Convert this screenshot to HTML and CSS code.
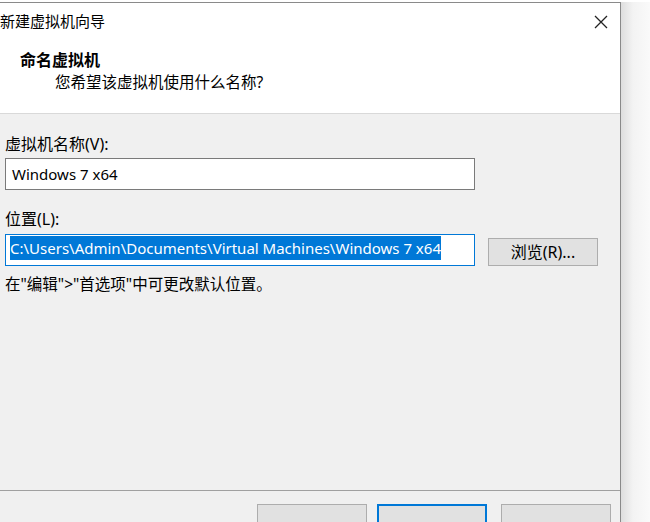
FILE: index.html
```html
<!DOCTYPE html>
<html lang="zh-CN">

<head>
  <meta charset="UTF-8">
  <title>新建虚拟机向导</title>
  <link rel="stylesheet" href="styles.css">
</head>

<body>
  <div class='screen'>
    <div class='window'>
      <div class='top'>
        <div class='titlebar'>
          <span class='title'>新建虚拟机向导</span>
          <svg class='close' width="14" height="14" viewBox="0 0 14 14">
            <path d="M1 1 L13 13 M13 1 L1 13" stroke="#222" stroke-width="1.3" fill="none"/>
          </svg>
        </div>
        <div class='step'>
          <div class='step-name'>命名虚拟机</div>
          <div class='step-desc'>您希望该虚拟机使用什么名称?</div>
        </div>
      </div>
      <div class='content'>
        <div class='label'>虚拟机名称(V):</div>
        <div class='field name-field'>Windows 7 x64</div>
        <div class='label loc-label'>位置(L):</div>
        <div class='row'>
          <div class='field loc-field'><span class='sel'>C:\Users\Admin\Documents\Virtual Machines\Windows 7 x64</span></div>
          <div class='btn browse'>浏览(R)...</div>
        </div>
        <div class='hint'>在"编辑"&gt;"首选项"中可更改默认位置。</div>
      </div>
      <div class='footer'>
        <div class='btn'></div>
        <div class='btn primary'></div>
        <div class='btn'></div>
      </div>
    </div>
    <div class='shade'></div>
  </div>
</body>
</html>
```

FILE: styles.css
```css
html, body {
  margin: 0;
  height: 100%;
  overflow: hidden;
  background: #fff;
}
body {
  font-family: "Noto Sans", "Noto Sans CJK SC", sans-serif;
  font-size: 15px;
  color: #000;
}
.screen {
  display: flex;
  height: 522px;
  padding-top: 2px;
  box-sizing: border-box;
}
.window {
  width: 621px;
  flex: none;
  display: flex;
  flex-direction: column;
  background: #f0f0f0;
  border-top: 1px solid #8a8a8a;
  border-right: 1px solid #8a8a8a;
  box-sizing: border-box;
}
.shade {
  flex: 1;
  background: linear-gradient(to right, #dedede, #f3f3f3 12px, #fafafa);
}
.top {
  background: #fff;
  height: 110px;
  border-bottom: 1px solid #d9d9d9;
}
.titlebar {
  display: flex;
  justify-content: space-between;
  align-items: center;
  height: 36px;
}
.title {
  line-height: 20px;
  font-size: 15px;
}
.close {
  margin-right: 12px;
  margin-top: 1px;
}
.step {
  padding-top: 11px;
}
.step-name {
  padding-left: 20px;
  font-weight: bold;
  font-size: 16px;
  line-height: 20px;
}
.step-desc {
  padding-left: 55px;
  margin-top: 2px;
  line-height: 20px;
  font-size: 15.5px;
}
.content {
  flex: 1;
  padding: 20px 0 0 5px;
  border-bottom: 1px solid #a0a0a0;
}
.label {
  font-size: 16px;
  line-height: 20px;
}
.field {
  width: 470px;
  height: 32px;
  box-sizing: border-box;
  background: #fff;
  border: 1px solid #7a7a7a;
  font-size: 15px;
  line-height: 30px;
  padding-left: 6px;
  white-space: nowrap;
  overflow: hidden;
}
.name-field {
  margin-top: 4px;
}
.loc-label {
  margin-top: 19px;
}
.row {
  display: flex;
  align-items: center;
  gap: 13px;
  margin-top: 5px;
}
.loc-field {
  border-color: #0078d7;
  padding-left: 4px;
  line-height: 27px;
}
.sel {
  background: #0078d7;
  color: #fff;
  padding: 2px 0;
}
.btn {
  width: 110px;
  height: 28px;
  box-sizing: border-box;
  background: #e1e1e1;
  border: 1px solid #adadad;
  text-align: center;
  line-height: 26px;
  font-size: 16px;
}
.browse {
  margin-top: 3px;
}
.hint {
  margin-top: 8px;
  line-height: 20px;
  font-size: 15.5px;
}
.footer {
  height: 18px;
  display: flex;
  gap: 10px;
  padding: 13px 0 0 257px;
  overflow: hidden;
}
.footer .btn {
  flex: none;
}
.primary {
  border: 2px solid #0078d7;
  margin-right: 4px;
}
```
